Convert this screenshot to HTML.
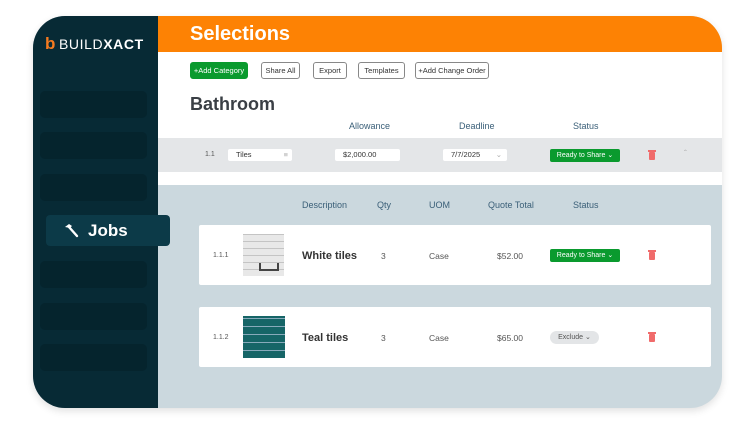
<!DOCTYPE html>
<html><head><meta charset="utf-8"><style>
*{margin:0;padding:0;box-sizing:border-box}
body{width:752px;height:426px;background:#fff;font-family:"Liberation Sans",Arial,sans-serif;position:relative;overflow:hidden}
.frame{position:absolute;left:33px;top:16px;width:689px;height:392px;border-radius:32px;overflow:hidden;background:#cbd8de;box-shadow:0 3px 8px rgba(0,0,0,.12)}
.side{position:absolute;left:0;top:0;width:125px;height:392px;background:#072a35}
.si{position:absolute;left:7px;width:107px;height:27px;border-radius:5px;background:#05242d}
.jobs{position:absolute;left:13px;top:199px;width:124px;height:31px;border-radius:4px;background:#0c3a48;color:#fff;font-weight:bold;font-size:17px;line-height:31px;padding-left:42px;z-index:2}
.logo{position:absolute;left:12px;top:18px;color:#fff;font-size:14px;letter-spacing:.6px}
.hdr{position:absolute;left:125px;top:0;width:564px;height:36px;background:#fd8204;color:#fff;font-size:20px;font-weight:bold;line-height:36px;padding-left:32px}
.top{position:absolute;left:125px;top:36px;width:564px;height:133px;background:#fff}
.btn{position:absolute;top:10px;height:17px;border:1px solid #888;border-radius:3px;font-size:7.5px;line-height:15px;text-align:center;color:#333;background:#fff}
.g{background:#0a9a2e;border-color:#0a9a2e;color:#fff}
.t{position:absolute;font-size:8.5px;color:#555}
.h{position:absolute;font-size:9px;color:#3a5f78}
.card{position:absolute;left:166px;width:512px;height:60px;background:#fff;border-radius:2px}
.pill{position:absolute;font-size:7px;line-height:13px;text-align:center;border-radius:2px}
.inp{position:absolute;background:#fff;height:12px;font-size:7.5px;line-height:12px;color:#333;border-radius:2px;padding-left:8px}
.trash{position:absolute;width:6px;height:8px;background:#f06b6b;border-radius:1px}
.trash:before{content:"";position:absolute;left:-1px;top:-2px;width:8px;height:1.5px;background:#f06b6b}
</style></head><body>
<div class="frame">
 <div class="side">
  <div class="logo"><span style="color:#f47b20;font-weight:bold;font-size:17px;margin-right:3px">b</span>BUILD<b>XACT</b></div>
  <div class="si" style="top:75px"></div><div class="si" style="top:116px"></div><div class="si" style="top:158px"></div>
  <div class="si" style="top:245px"></div><div class="si" style="top:287px"></div><div class="si" style="top:328px"></div>
 </div>
 <div class="jobs"><svg style="position:absolute;left:18px;top:8px" width="15" height="15" viewBox="0 0 15 15"><path d="M1 4 L5 1 L8 3 L6 5 Z" fill="#fff"/><path d="M5 4 L13 13" stroke="#fff" stroke-width="2.4" stroke-linecap="round"/></svg>Jobs</div>
 <div class="hdr">Selections</div>
 <div class="top">
  <div class="btn g" style="left:32px;width:58px">+Add Category</div>
  <div class="btn" style="left:103px;width:39px">Share All</div>
  <div class="btn" style="left:155px;width:34px">Export</div>
  <div class="btn" style="left:200px;width:47px">Templates</div>
  <div class="btn" style="left:257px;width:74px">+Add Change Order</div>
  <div style="position:absolute;left:32px;top:42px;font-size:18px;font-weight:bold;color:#3a3f45">Bathroom</div>
  <div class="h" style="left:191px;top:69px">Allowance</div>
  <div class="h" style="left:301px;top:69px">Deadline</div>
  <div class="h" style="left:415px;top:69px">Status</div>
  <div style="position:absolute;left:0;top:86px;width:564px;height:34px;background:#e4e6e8">
   <div class="t" style="left:47px;top:13px;font-size:7px">1.1</div>
   <div class="inp" style="left:70px;top:11px;width:64px">Tiles<span style="position:absolute;right:4px;color:#aaa">≡</span></div>
   <div class="inp" style="left:177px;top:11px;width:65px">$2,000.00</div>
   <div class="inp" style="left:285px;top:11px;width:64px">7/7/2025<span style="position:absolute;right:5px;color:#aaa">⌄</span></div>
   <div class="pill g" style="left:392px;top:11px;width:70px;height:13px;color:#fff">Ready to Share ⌄</div>
   <div class="trash" style="left:491px;top:14px"></div>
   <div class="t" style="left:526px;top:10px;color:#aaa">ˆ</div>
  </div>
 </div>
 <div class="h" style="left:269px;top:184px">Description</div>
 <div class="h" style="left:344px;top:184px">Qty</div>
 <div class="h" style="left:396px;top:184px">UOM</div>
 <div class="h" style="left:455px;top:184px">Quote Total</div>
 <div class="h" style="left:540px;top:184px">Status</div>
 <div class="card" style="top:209px">
  <div class="t" style="left:14px;top:27px;font-size:7px">1.1.1</div>
  <div style="position:absolute;left:44px;top:9px;width:41px;height:42px;background:repeating-linear-gradient(0deg,#e8e8e8 0 6px,#c4c4c4 6px 7px);"><div style="position:absolute;left:16px;bottom:5px;width:20px;height:8px;border-bottom:2px solid #444;border-left:2px solid #444;border-right:2px solid #444"></div></div>
  <div style="position:absolute;left:103px;top:25px;font-size:11px;font-weight:bold;color:#333">White tiles</div>
  <div class="t" style="left:182px;top:26px">3</div>
  <div class="t" style="left:230px;top:26px">Case</div>
  <div class="t" style="left:298px;top:26px">$52.00</div>
  <div class="pill g" style="left:351px;top:24px;width:70px;height:13px;color:#fff">Ready to Share ⌄</div>
  <div class="trash" style="left:450px;top:27px"></div>
 </div>
 <div class="card" style="top:291px">
  <div class="t" style="left:14px;top:27px;font-size:7px">1.1.2</div>
  <div style="position:absolute;left:44px;top:9px;width:42px;height:42px;background:repeating-linear-gradient(0deg,#166567 0 7px,#8ab 7px 8px),#166567"></div>
  <div style="position:absolute;left:103px;top:25px;font-size:11px;font-weight:bold;color:#333">Teal tiles</div>
  <div class="t" style="left:182px;top:26px">3</div>
  <div class="t" style="left:230px;top:26px">Case</div>
  <div class="t" style="left:298px;top:26px">$65.00</div>
  <div class="pill" style="left:351px;top:24px;width:49px;height:13px;background:#e3e5e7;color:#555;border-radius:7px">Exclude ⌄</div>
  <div class="trash" style="left:450px;top:27px"></div>
 </div>
</div>
</body></html>
